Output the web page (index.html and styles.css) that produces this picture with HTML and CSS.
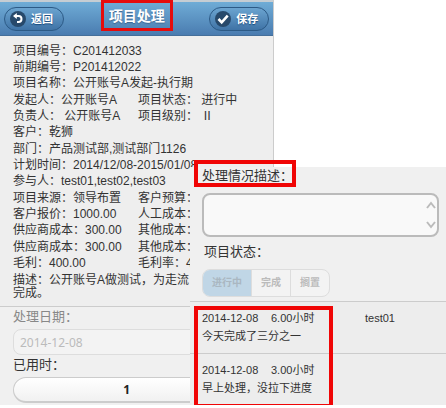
FILE: index.html
```html
<!DOCTYPE html>
<html lang="zh-CN">
<head>
    <meta charset="utf-8">
    <title>项目处理</title>
    <link rel="stylesheet" href="styles.css">
</head>
<body>
    <div class="screen">
        <div class="header">
            <button class="btn" type="button">
                <svg class="icon" viewBox="0 0 18 18">
                    <circle cx="9" cy="9" r="8" fill="#27496b"/>
                    <path d="M7 6h2.500a3 3 0 0 1 0 6H8" fill="none" stroke="#fff" stroke-width="2"/>
                    <path d="M4 6l3.800-3v6z" fill="#fff"/>
                </svg>
                返回
            </button>
            <h1 class="title">项目处理</h1>
            <button class="btn" type="button">
                <svg class="icon" viewBox="0 0 18 18">
                    <circle cx="9" cy="9" r="8" fill="#27496b"/>
                    <path d="M4.500 9l3.200 3.300 6-6.600" fill="none" stroke="#fff" stroke-width="2.600"/>
                </svg>
                保存
            </button>
        </div>
        <div class="info">
            <div class="group">
                <div>项目编号：C201412033</div>
                <div>前期编号：P201412022</div>
                <div>项目名称：公开账号A发起-执行期</div>
            </div>
            <div class="group">
                <div class="pair"><span>发起人：公开账号A</span><span>项目状态： 进行中</span></div>
                <div class="pair"><span>负责人： 公开账号A</span><span>项目级别： Ⅱ</span></div>
                <div>客户：乾狮</div>
            </div>
            <div class="group">
                <div>部门：产品测试部,测试部门1126</div>
                <div>计划时间：2014/12/08-2015/01/08</div>
                <div>参与人：test01,test02,test03</div>
            </div>
            <div class="group">
                <div class="pair"><span>项目来源：领导布置</span><span>客户预算：</span></div>
                <div class="pair"><span>客户报价：1000.00</span><span>人工成本：</span></div>
                <div class="pair"><span>供应商成本：300.00</span><span>其他成本：</span></div>
            </div>
            <div class="group">
                <div class="pair"><span>供应商成本：300.00</span><span>其他成本：</span></div>
                <div class="pair"><span>毛利：400.00</span><span>毛利率：4</span></div>
            </div>
            <div class="desc">描述：公开账号A做测试，为走流<br>完成。</div>
        </div>
        <div class="form">
            <label class="label muted" for="date">处理日期：</label>
            <input class="date" id="date" type="text" value="2014-12-08" disabled>
            <label class="label" for="hours">已用时：</label>
            <select class="hours" id="hours">
                <option>1</option>
            </select>
        </div>
    </div>

    <div class="panel">
        <div class="panel-form">
            <label class="label marked" for="note">处理情况描述：<span class="mark"></span></label>
            <div class="note-box">
                <textarea class="note" id="note"></textarea>
                <svg class="arrows" viewBox="0 0 12 32">
                    <path d="M2 9l4-5 4 5M2 23l4 5 4-5" fill="none" stroke="#bbb" stroke-width="2"/>
                </svg>
            </div>
            <div class="label status-label" id="status">项目状态：</div>
            <div class="segments" role="radiogroup" aria-labelledby="status">
                <label class="segment active"><input type="radio" name="status" checked disabled>进行中</label>
                <label class="segment"><input type="radio" name="status" disabled>完成</label>
                <label class="segment"><input type="radio" name="status" disabled>搁置</label>
            </div>
        </div>
        <div class="log">
            <ul class="entries">
                <li>
                    <div class="entry"><span>2014-12-08</span><span>6.00小时</span><span>test01</span></div>
                    <div>今天完成了三分之一</div>
                </li>
                <li>
                    <div class="entry"><span>2014-12-08</span><span>3.00小时</span></div>
                    <div>早上处理，没拉下进度</div>
                </li>
            </ul>
            <span class="mark"></span>
        </div>
    </div>
</body>
</html>
```
FILE: styles.css
```css
* {
    box-sizing: border-box;
}

body {
    position: relative;
    margin: 0;
    background-color: #fff;
    color: #333;
    font: 12px/16px "Liberation Sans", "Noto Sans CJK SC", sans-serif;
}

.screen {
    width: 61.5%;
    border-right: 1px solid #ccc;
    background-color: #eee;
}

.header {
    display: flex;
    align-items: center;
    justify-content: space-between;
    height: 36px;
    padding: 0 4px;
    border-top: 2px solid #c5cdd3;
    border-bottom: 1px solid #456f9a;
    background: linear-gradient(#6facd6, #4a7cb0);
}

.btn {
    display: flex;
    align-items: center;
    gap: 4px;
    height: 24px;
    padding: 0 10px 0 4px;
    border: 1px solid #2c5a86;
    border-radius: 12px;
    background: linear-gradient(#6ba4d0, #3f73a6);
    color: #fff;
    font: bold 11px/16px "Liberation Sans", "Noto Sans CJK SC", sans-serif;
    text-shadow: 0 1px 1px #194b7e;
}

.icon {
    width: 18px;
    height: 18px;
}

.title {
    align-self: flex-start;
    height: 31px;
    margin: -2px 0 0;
    padding: 0 5px;
    border: 3px solid #e60c0c;
    color: #fff;
    font-size: 14px;
    line-height: 27px;
    text-shadow: 0 1px 1px #3e6790;
}

.info {
    padding: 7px 0 6px 13px;
    border-bottom: 1px solid #ccc;
    white-space: nowrap;
}

.group {
    margin-bottom: 1px;
}

.pair {
    display: grid;
    grid-template-columns: 125px 1fr;
}

.desc {
    padding-top: 2px;
    line-height: 13px;
}

.form {
    padding: 0 13px 2px;
    background-color: #f0f0f0;
}

.label {
    display: block;
    font-size: 13px;
    line-height: 20px;
}

.muted {
    color: #888;
}

.date,
.hours {
    display: block;
    width: 100%;
    height: 26px;
    border: 1px solid #ccc;
    border-radius: 8px;
    font-family: "Noto Sans", sans-serif;
    font-size: 12px;
}

.date {
    margin: 2px 0 0;
    padding: 0 6px;
    border-color: #ddd;
    background-color: #f3f3f3;
    color: #bbb;
}

.hours {
    appearance: none;
    margin-top: 2px;
    padding: 0 20px 0 0;
    border-width: 1px 1px 2px;
    border-radius: 13px;
    background: linear-gradient(#fff, #f1f1f1);
    color: #222;
    font-weight: bold;
    text-align-last: center;
}

/* second screen, lies over the first */
.panel {
    position: absolute;
    top: 167px;
    left: 190px;
    right: 0;
    background-color: #f0f0f0;
}

.panel-form {
    padding: 0 7px 4px 12px;
}

.marked {
    position: relative;
    width: fit-content;
    line-height: 18px;
}

.mark {
    position: absolute;
    border: 4px solid #f00505;
}

.marked .mark {
    inset: -7px -3px -2px -8px;
}

.note-box {
    position: relative;
    margin: 8px 0 5px;
}

.note {
    display: block;
    width: 100%;
    height: 44px;
    padding: 4px 20px 4px 6px;
    border: 2px solid #bbb;
    border-radius: 8px;
    background-color: #f9f9f9;
    font: inherit;
    resize: none;
}

.arrows {
    position: absolute;
    top: 6px;
    right: 2px;
    width: 12px;
    height: 32px;
}

.status-label {
    padding-left: 2px;
}

.segments {
    display: flex;
    width: fit-content;
    margin-top: 7px;
    border: 1px solid #ddd;
    border-radius: 8px;
    overflow: hidden;
    background-color: #f3f3f3;
}

.segment {
    padding: 0 9px;
    border-left: 1px solid #ddd;
    color: #bbb;
    font-size: 10px;
    font-weight: bold;
    line-height: 26px;
}

.segment input {
    position: absolute;
    opacity: 0;
}

.active {
    border-left: 0;
    background-color: #c0d6e6;
    color: #aab7c1;
}

.log {
    position: relative;
    border-bottom: 1px solid #ccc;
    background-color: #ededed;
    font-size: 11px;
    line-height: 18px;
}

.entries {
    margin: 0;
    padding: 0;
    list-style: none;
}

.entries li {
    padding: 7px 12px 8px;
    border-top: 1px solid #ccc;
}

.entry {
    display: grid;
    grid-template-columns: 69px 94px 1fr;
}

.log .mark {
    top: 5px;
    left: 4px;
    bottom: -3px;
    width: 139px;
}
```
